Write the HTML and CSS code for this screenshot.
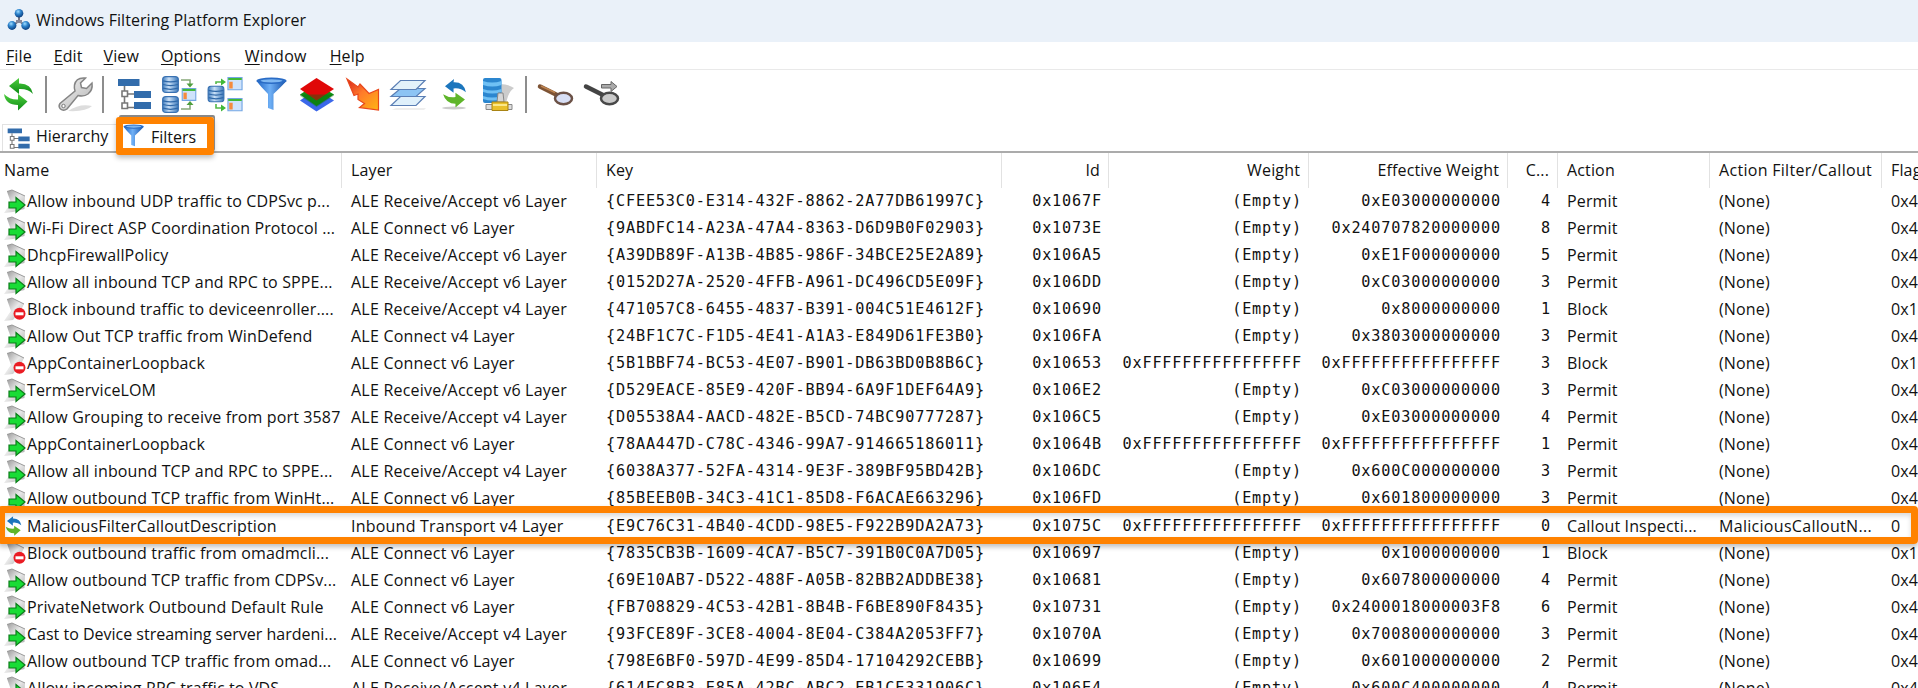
FILE: index.html
```
<!DOCTYPE html>
<html lang="en">
<head>
<meta charset="utf-8">
<title>Windows Filtering Platform Explorer</title>
<link rel="stylesheet" href="styles.css">
</head>
<body>
<svg class="defs" width="0" height="0" aria-hidden="true">
  <defs>
    <linearGradient id="blueH" x1="0" x2="1" y1="0" y2="0"><stop offset="0" stop-color="#3f7dbf"/><stop offset=".4" stop-color="#c9e0f7"/><stop offset="1" stop-color="#3a77b9"/></linearGradient>
    <linearGradient id="funnelG" x1="0" x2="1" y1="0" y2="0"><stop offset="0" stop-color="#1c63c4"/><stop offset=".45" stop-color="#6fb0f6"/><stop offset="1" stop-color="#1450a8"/></linearGradient>
    <linearGradient id="greenG" x1="0" x2="0" y1="0" y2="1"><stop offset="0" stop-color="#4fcf3f"/><stop offset="1" stop-color="#0c8a14"/></linearGradient>
    <linearGradient id="metal" x1="0" x2="1" y1="0" y2="1"><stop offset="0" stop-color="#f4f4f4"/><stop offset="1" stop-color="#b4b4b4"/></linearGradient>
    <linearGradient id="hot" x1="0" x2="1" y1="0" y2="1"><stop offset="0" stop-color="#d8201c"/><stop offset=".45" stop-color="#ff7a2a"/><stop offset="1" stop-color="#ffb414"/></linearGradient>
    <linearGradient id="fade" x1="0" x2="1" y1="0" y2="1"><stop offset="0" stop-color="#8c8c8c"/><stop offset=".5" stop-color="#e9e9e9"/><stop offset="1" stop-color="#a9a9a9"/></linearGradient>
    <radialGradient id="ball" cx=".4" cy=".3" r=".7"><stop offset="0" stop-color="#9fdcff"/><stop offset=".45" stop-color="#2d83cc"/><stop offset="1" stop-color="#0c3f80"/></radialGradient>
    <symbol id="tree" viewBox="0 0 36 36">
      <path d="M7.500 10v21.500h11M7.500 18h11" fill="none" stroke="#777" stroke-width="1.600"/>
      <path d="M1 3h21.500v7H1zM17 15h17v7H17zM17 26h17v7H17z" fill="#326cab"/>
      <path d="M5 15h5.500v5.500H5zM5 27h5.500v5.500H5z" fill="#fff" stroke="#777" stroke-width="1.600"/>
    </symbol>
    <symbol id="funnel" viewBox="0 0 36 36">
      <path d="M3.500 5Q8 11 15 18v14l5.500 2V18Q28 11 33.500 5z" fill="url(#funnelG)"/>
      <ellipse cx="18.500" cy="4.800" rx="15" ry="3.200" fill="#2a6cc6"/>
      <ellipse cx="18.500" cy="4.800" rx="11" ry="1.600" fill="#7fb8f2"/>
    </symbol>
    <symbol id="db" viewBox="0 0 16 16">
      <rect x=".600" y=".600" width="14.800" height="14.800" rx="3" fill="url(#blueH)" stroke="#3a72b2" stroke-width="1.100"/>
      <path d="M1 4.500q7 2 14 0M1 8q7 2 14 0M1 11.500q7 2 14 0" fill="none" stroke="#2f68a8" stroke-width="1.200"/>
    </symbol>
    <symbol id="pane" viewBox="0 0 16 14">
      <path d="M.700.700h14.600v12.600H.700z" fill="#cfe3fb" stroke="#74a6e4" stroke-width="1.200"/>
      <path d="M1 1h14v2.200H1z" fill="#3fb837"/><path d="M2 5h3.600v7H2z" fill="#f58b3c"/>
    </symbol>
    <symbol id="swirl" viewBox="0 0 26 30">
      <path d="M25 14Q23 3 12 3.500L12.500 0 3 7.500l9 7V10Q19 9 25 14z" fill="#1c76bd"/>
      <path d="M1 16q3 10 13 10v4L24 21.500l-10-7V19Q7 20 1 16z" fill="#5fb52a"/>
    </symbol>
    <symbol id="allow" viewBox="0 0 22 27">
      <path d="M3 3.500L8 2l13 6-.500 13L9 24 0 25l7-10z" fill="url(#fade)"/>
      <path d="M3 3.500L8 2l13 6" fill="none" stroke="#999"/>
      <path d="M5 14h7V9.500l9 7.500-9 7.500V20H5z" fill="#19dc36" stroke="#0b7c19" stroke-width="1.200"/>
    </symbol>
    <symbol id="block" viewBox="0 0 22 27">
      <path d="M3 3.500L8 2l12 6-3 6L9 24 0 25l7-10z" fill="url(#fade)"/>
      <path d="M3 3.500L8 2l12 6" fill="none" stroke="#999"/>
      <circle cx="15.500" cy="17.800" r="6" fill="#ea1c24"/><path d="M11.500 16.300h8v3h-8z" fill="#fff"/>
    </symbol>
  </defs>
</svg>

<header class="titlebar">
  <svg class="app-icon" viewBox="0 0 24 24"><path d="M12 6v7M12 13L5 18M12 13l7 5" stroke="#667" stroke-width="1.800" fill="none"/><path d="M9 12h6v3H9z" fill="#889"/><circle cx="12" cy="5.300" r="4.300" fill="url(#ball)"/><circle cx="5" cy="17.500" r="4.400" fill="url(#ball)"/><circle cx="18.700" cy="17.500" r="4.400" fill="url(#ball)"/></svg>
  <span class="title">Windows Filtering Platform Explorer</span>
</header>

<nav class="menubar">
  <span><u>F</u>ile</span><span><u>E</u>dit</span><span><u>V</u>iew</span><span><u>O</u>ptions</span><span><u>W</u>indow</span><span><u>H</u>elp</span>
</nav>

<div class="toolbar">
  <svg viewBox="0 0 36 36"><path d="M33 18Q31 7 19 7.500V2L9 10l10 8v-5q9-.500 14 5z" fill="url(#greenG)"/><path d="M4 18q1.500 11 14 11v5.500l9.500-9L18 18v5.500q-8 .500-14-5.500z" fill="url(#greenG)"/></svg>
  <i class="sep"></i>
  <svg viewBox="0 0 36 36"><path d="M10 35q12-8 24-5-6 6-24 5z" fill="#ddd"/><path d="M27.500 2Q18 1 16.500 9q-.500 3 .500 6L2 27.500q-2 3 .500 5.500 3 2.500 6.500 0L20 19.500q6 1.500 10-1.500 5-4 4-11l-5.500 5.500-5-1-1-4.500z" fill="url(#metal)" stroke="#858585" stroke-width="1.500"/><circle cx="5.500" cy="30" r="1.700" fill="#fff" stroke="#777"/></svg>
  <i class="sep second"></i>
  <svg><use href="#tree"/></svg>
  <svg viewBox="0 0 36 36"><use href="#db" x="0" y="0" width="17" height="17"/><use href="#db" x="0" y="20" width="17" height="17"/><path d="M19 4h9v6M19 33h9v-6" fill="none" stroke="#86a878" stroke-width="1.600"/><path d="M24.500 7.500h7L28 11.500zM24.500 29h7L28 25z" fill="#4d9e3c"/><use href="#pane" x="19" y="12" width="16" height="13"/></svg>
  <svg viewBox="0 0 36 36"><use href="#db" x="0" y="9.500" width="18" height="17"/><path d="M9 8V6h6M9 28v4h6" fill="none" stroke="#55b848" stroke-width="1.600"/><path d="M14 2.500L19 6l-5 3.500zM14 28.500l5 3.500-5 3.500z" fill="#3fb837"/><use href="#pane" x="20" y="1" width="16" height="13.500"/><use href="#pane" x="20" y="22" width="16" height="13.500"/></svg>
  <svg class="nudge"><use href="#funnel"/></svg>
  <svg viewBox="0 0 36 36"><path d="M2 24.500L18.500 13 36 24.500 18.500 35.500z" fill="#3c68ea"/><path d="M2 18.500L18.500 8 36 18.500 18.500 30z" fill="#0f9214"/><path d="M2 13L18.500 2 36 13 18.500 24.500z" fill="#e00808"/><path d="M2 18.500v1.200L18.500 31 36 19.500v-1z" fill="#0a6c10" opacity=".4"/></svg>
  <svg viewBox="0 0 36 36"><path d="M4 3L15 11l2-3 9 9.500 9.500-4V34l-19-2.500 5-4-6.500-4V18l-4 1.500z" fill="url(#hot)" stroke="#e8481c" stroke-width="1.200"/></svg>
  <svg viewBox="0 0 36 36"><path d="M4 34h32l2-2H8z" fill="#eee"/><g stroke="#5b7fb5" stroke-width="1.200"><path d="M12.500 20.500H37L28 29.500H3z" fill="#dff0fb"/><path d="M12.500 12.500H37L28 20.500H3z" fill="#8cc4f4"/><path d="M12.500 4.500H37L28 13.500H3z" fill="#e4f2fa"/></g></svg>
  <svg viewBox="0 0 36 36"><ellipse cx="21" cy="32" rx="12" ry="1.500" fill="#ccc"/><use href="#swirl" x="9" y="3" width="25" height="28.500"/></svg>
  <svg viewBox="0 0 36 36"><path d="M22 8q8 0 14 4-6 4-8 16h-6z" fill="#ccc"/><rect x="5" y="2" width="18.500" height="25" rx="2" fill="#2b86cf"/><path d="M5 5q9 3 18.500 0v4q-9 3-18.500 0zM5 13q9 3 18.500 0v3q-9 3-18.500 0zM5 20q9 3 18.500 0v3q-9 3-18.500 0z" fill="#6fc0f4"/><path d="M19 26l1-9h5l1 9z" fill="#d6d6d6" stroke="#888"/><path d="M8 28.500h26v5H8z" fill="#ddd" stroke="#888"/><path d="M14 26h16v8.500H14z" fill="#e9c02b" stroke="#a98414"/><path d="M15 28h14v2H15z" fill="#fbe88a"/></svg>
  <i class="sep"></i>
  <svg viewBox="0 0 36 36"><path d="M2 10.500l17 8.500" stroke="#7d5335" stroke-width="4.500" stroke-linecap="round"/><path d="M3 10l14 6.500" stroke="#bd8350" stroke-width="1.500"/><ellipse cx="25.500" cy="22.500" rx="8.500" ry="5.700" fill="#d8dff5" stroke="#6b5146" stroke-width="2.500"/></svg>
  <svg viewBox="0 0 36 36"><path d="M3 10.500l17 8.500" stroke="#444" stroke-width="4.500" stroke-linecap="round"/><ellipse cx="26.500" cy="22.500" rx="8.500" ry="5.700" fill="#c9c9c9" stroke="#484848" stroke-width="2.500"/><path d="M18.500 8.500H28V5.500l6 5-6 5v-3.500h-9.500z" fill="#aaa" stroke="#666"/></svg>
</div>

<div class="tabs">
  <div class="tab hierarchy"><svg><use href="#tree"/></svg><span>Hierarchy</span></div>
  <div class="tab active"><svg viewBox="3 1 32 34"><use href="#funnel" width="36" height="36"/></svg><span>Filters</span></div>
</div>

<main class="list">
  <div class="row head"><b>Name</b><b>Layer</b><b>Key</b><b class="r">Id</b><b class="r">Weight</b><b class="r">Effective Weight</b><b class="r">C...</b><b>Action</b><b class="wide">Action Filter/Callout</b><b>Flags</b></div>
  <div class="row"><span class="n"><svg><use href="#allow"/></svg>Allow inbound UDP traffic to CDPSvc p...</span><span class="l">ALE Receive/Accept v6 Layer</span><code>{CFEE53C0-E314-432F-8862-2A77DB61997C}</code><code class="r">0x1067F</code><code class="r">(Empty)</code><code class="r">0xE03000000000</code><code class="r">4</code><span>Permit</span><span>(None)</span><span>0x40</span></div>
  <div class="row"><span class="n"><svg><use href="#allow"/></svg>Wi-Fi Direct ASP Coordination Protocol ...</span><span class="l">ALE Connect v6 Layer</span><code>{9ABDFC14-A23A-47A4-8363-D6D9B0F02903}</code><code class="r">0x1073E</code><code class="r">(Empty)</code><code class="r">0x240707820000000</code><code class="r">8</code><span>Permit</span><span>(None)</span><span>0x40</span></div>
  <div class="row"><span class="n"><svg><use href="#allow"/></svg>DhcpFirewallPolicy</span><span class="l">ALE Receive/Accept v6 Layer</span><code>{A39DB89F-A13B-4B85-986F-34BCE25E2A89}</code><code class="r">0x106A5</code><code class="r">(Empty)</code><code class="r">0xE1F000000000</code><code class="r">5</code><span>Permit</span><span>(None)</span><span>0x40</span></div>
  <div class="row"><span class="n"><svg><use href="#allow"/></svg>Allow all inbound TCP and RPC to SPPE...</span><span class="l">ALE Receive/Accept v6 Layer</span><code>{0152D27A-2520-4FFB-A961-DC496CD5E09F}</code><code class="r">0x106DD</code><code class="r">(Empty)</code><code class="r">0xC03000000000</code><code class="r">3</code><span>Permit</span><span>(None)</span><span>0x40</span></div>
  <div class="row"><span class="n"><svg><use href="#block"/></svg>Block inbound traffic to deviceenroller....</span><span class="l">ALE Receive/Accept v4 Layer</span><code>{471057C8-6455-4837-B391-004C51E4612F}</code><code class="r">0x10690</code><code class="r">(Empty)</code><code class="r">0x8000000000</code><code class="r">1</code><span>Block</span><span>(None)</span><span>0x10</span></div>
  <div class="row"><span class="n"><svg><use href="#allow"/></svg>Allow Out TCP traffic from WinDefend</span><span class="l">ALE Connect v4 Layer</span><code>{24BF1C7C-F1D5-4E41-A1A3-E849D61FE3B0}</code><code class="r">0x106FA</code><code class="r">(Empty)</code><code class="r">0x3803000000000</code><code class="r">3</code><span>Permit</span><span>(None)</span><span>0x40</span></div>
  <div class="row"><span class="n"><svg><use href="#block"/></svg>AppContainerLoopback</span><span class="l">ALE Connect v6 Layer</span><code>{5B1BBF74-BC53-4E07-B901-DB63BD0B8B6C}</code><code class="r">0x10653</code><code class="r">0xFFFFFFFFFFFFFFFF</code><code class="r">0xFFFFFFFFFFFFFFFF</code><code class="r">3</code><span>Block</span><span>(None)</span><span>0x10</span></div>
  <div class="row"><span class="n"><svg><use href="#allow"/></svg>TermServiceLOM</span><span class="l">ALE Receive/Accept v6 Layer</span><code>{D529EACE-85E9-420F-BB94-6A9F1DEF64A9}</code><code class="r">0x106E2</code><code class="r">(Empty)</code><code class="r">0xC03000000000</code><code class="r">3</code><span>Permit</span><span>(None)</span><span>0x40</span></div>
  <div class="row"><span class="n"><svg><use href="#allow"/></svg>Allow Grouping to receive from port 3587</span><span class="l">ALE Receive/Accept v4 Layer</span><code>{D05538A4-AACD-482E-B5CD-74BC90777287}</code><code class="r">0x106C5</code><code class="r">(Empty)</code><code class="r">0xE03000000000</code><code class="r">4</code><span>Permit</span><span>(None)</span><span>0x40</span></div>
  <div class="row"><span class="n"><svg><use href="#allow"/></svg>AppContainerLoopback</span><span class="l">ALE Connect v6 Layer</span><code>{78AA447D-C78C-4346-99A7-914665186011}</code><code class="r">0x1064B</code><code class="r">0xFFFFFFFFFFFFFFFF</code><code class="r">0xFFFFFFFFFFFFFFFF</code><code class="r">1</code><span>Permit</span><span>(None)</span><span>0x40</span></div>
  <div class="row"><span class="n"><svg><use href="#allow"/></svg>Allow all inbound TCP and RPC to SPPE...</span><span class="l">ALE Receive/Accept v4 Layer</span><code>{6038A377-52FA-4314-9E3F-389BF95BD42B}</code><code class="r">0x106DC</code><code class="r">(Empty)</code><code class="r">0x600C000000000</code><code class="r">3</code><span>Permit</span><span>(None)</span><span>0x40</span></div>
  <div class="row"><span class="n"><svg><use href="#allow"/></svg>Allow outbound TCP traffic from WinHt...</span><span class="l">ALE Connect v6 Layer</span><code>{85BEEB0B-34C3-41C1-85D8-F6ACAE663296}</code><code class="r">0x106FD</code><code class="r">(Empty)</code><code class="r">0x601800000000</code><code class="r">3</code><span>Permit</span><span>(None)</span><span>0x40</span></div>
  <div class="row marked"><span class="n"><svg viewBox="0 0 22 27"><use href="#swirl" x="1" y="3" width="17" height="20"/></svg>MaliciousFilterCalloutDescription</span><span class="l">Inbound Transport v4 Layer</span><code>{E9C76C31-4B40-4CDD-98E5-F922B9DA2A73}</code><code class="r">0x1075C</code><code class="r">0xFFFFFFFFFFFFFFFF</code><code class="r">0xFFFFFFFFFFFFFFFF</code><code class="r">0</code><span>Callout Inspecti...</span><span class="wide">MaliciousCalloutN...</span><span>0</span></div>
  <div class="row"><span class="n"><svg><use href="#block"/></svg>Block outbound traffic from omadmcli...</span><span class="l">ALE Connect v6 Layer</span><code>{7835CB3B-1609-4CA7-B5C7-391B0C0A7D05}</code><code class="r">0x10697</code><code class="r">(Empty)</code><code class="r">0x1000000000</code><code class="r">1</code><span>Block</span><span>(None)</span><span>0x10</span></div>
  <div class="row"><span class="n"><svg><use href="#allow"/></svg>Allow outbound TCP traffic from CDPSv...</span><span class="l">ALE Connect v6 Layer</span><code>{69E10AB7-D522-488F-A05B-82BB2ADDBE38}</code><code class="r">0x10681</code><code class="r">(Empty)</code><code class="r">0x607800000000</code><code class="r">4</code><span>Permit</span><span>(None)</span><span>0x40</span></div>
  <div class="row"><span class="n"><svg><use href="#allow"/></svg>PrivateNetwork Outbound Default Rule</span><span class="l">ALE Connect v6 Layer</span><code>{FB708829-4C53-42B1-8B4B-F6BE890F8435}</code><code class="r">0x10731</code><code class="r">(Empty)</code><code class="r">0x2400018000003F8</code><code class="r">6</code><span>Permit</span><span>(None)</span><span>0x40</span></div>
  <div class="row"><span class="n tight"><svg><use href="#allow"/></svg>Cast to Device streaming server hardeni...</span><span class="l">ALE Receive/Accept v4 Layer</span><code>{93FCE89F-3CE8-4004-8E04-C384A2053FF7}</code><code class="r">0x1070A</code><code class="r">(Empty)</code><code class="r">0x7008000000000</code><code class="r">3</code><span>Permit</span><span>(None)</span><span>0x40</span></div>
  <div class="row"><span class="n"><svg><use href="#allow"/></svg>Allow outbound TCP traffic from omad...</span><span class="l">ALE Connect v6 Layer</span><code>{798E6BF0-597D-4E99-85D4-17104292CEBB}</code><code class="r">0x10699</code><code class="r">(Empty)</code><code class="r">0x601000000000</code><code class="r">2</code><span>Permit</span><span>(None)</span><span>0x40</span></div>
  <div class="row"><span class="n"><svg><use href="#allow"/></svg>Allow incoming RPC traffic to VDS</span><span class="l">ALE Receive/Accept v4 Layer</span><code>{614EC8B3-E85A-42BC-ABC2-EB1CE331906C}</code><code class="r">0x106E4</code><code class="r">(Empty)</code><code class="r">0x600C400000000</code><code class="r">4</code><span>Permit</span><span>(None)</span><span>0x40</span></div>
</main>
</body>
</html>
```
FILE: styles.css
```
*, *::after { box-sizing: border-box; }
body {
  margin: 0;
  height: 688px;
  overflow: hidden;
  background: #fff;
  color: #111;
  font: 16px/22px "Open Sans", "Noto Sans", sans-serif;
}
.defs { position: absolute; }
svg { display: block; flex: none; }

.titlebar {
  display: flex;
  align-items: center;
  height: 42px;
  padding: 0 0 3px 7px;
  background: #eaf1f9;
}
.app-icon { width: 24px; height: 24px; }
.title { margin-left: 5px; letter-spacing: .06px; }

.menubar {
  display: flex;
  gap: 21px;
  height: 28px;
  padding: 3px 0 0 6px;
  border-bottom: 1px solid #e9e9e9;
  letter-spacing: .1px;
}
.menubar span:nth-child(2), .menubar span:nth-child(4) { margin-left: 1px; }
.menubar span:nth-child(5) { margin-left: 3px; letter-spacing: .25px; }
.menubar span:nth-child(6) { margin-left: 2px; }
.menubar u { text-decoration-thickness: 1px; text-underline-offset: 2px; }

.toolbar {
  display: flex;
  align-items: flex-start;
  gap: 9px;
  height: 47px;
  padding: 6px 0 0;
}
.toolbar svg { width: 36px; height: 36px; overflow: visible; }
.toolbar .nudge { margin-left: 1px; }
.sep { width: 2px; height: 37px; margin-right: 2px; background: #8d8d8d; }
.sep.second { margin: 0 4px 0 -1px; }
.toolbar .sep:last-of-type { margin: 0 2px; }

.tabs {
  display: flex;
  height: 36px;
  border-bottom: 2px solid #ababab;
}
.tab { display: flex; }
.hierarchy {
  width: 114px;
  height: 27px;
  margin: 7px 0 0 2px;
  padding-left: 4px;
  border: solid #e2e2e2;
  border-width: 1px 0 0 1px;
}
.hierarchy svg { width: 24px; height: 25px; margin-top: 1px; }
.hierarchy span { margin-left: 5px; }
.active {
  position: relative;
  z-index: 1;
  width: 98px;
  height: 38px;
  border: 7px solid #ff8200;
  border-radius: 3px;
  box-shadow: 2px -3px 0 -1px #888, 0 3px 5px rgba(0, 0, 0, .25);
}
.active svg { width: 22px; height: 23px; }
.active span { margin: 2px 0 0 6px; }

.list { width: 1918px; overflow: hidden; }
.row {
  display: grid;
  grid-template-columns: 342px 255px 405px 107px 200px 199px 50px 152px 172px 100px;
  width: 1982px;
  height: 27.08px;
  line-height: 27px;
  white-space: nowrap;
}
.row > * { padding: 0 8px 0 9px; letter-spacing: .15px; }
.row > .n { display: flex; padding: 0 0 0 4px; letter-spacing: .13px; }
.row > .tight { letter-spacing: 0; }
.row > .l { letter-spacing: .22px; }
.row > .r { text-align: right; }
.row > .wide { letter-spacing: .3px; }
.n svg { width: 22px; height: 27px; margin-right: 1px; }
.row > code {
  padding: 0 7px 0 9px;
  font: 15.2px/26px "DejaVu Sans Mono", "Liberation Mono", monospace;
  letter-spacing: .83px;
}
.head { height: 34.6px; line-height: 34px; }
.head > b { font-weight: 400; border-right: 1px solid #e2e2e2; }
.head > b:first-child { padding-left: 4px; }

.marked { position: relative; }
.marked::after {
  content: "";
  position: absolute;
  left: -2px;
  top: -6.500px;
  width: 1920px;
  height: 38px;
  border: 7px solid #ff8200;
  border-radius: 4px;
  box-shadow: 0 3px 5px rgba(0, 0, 0, .25), inset 0 3px 5px rgba(0, 0, 0, .15);
}
```
